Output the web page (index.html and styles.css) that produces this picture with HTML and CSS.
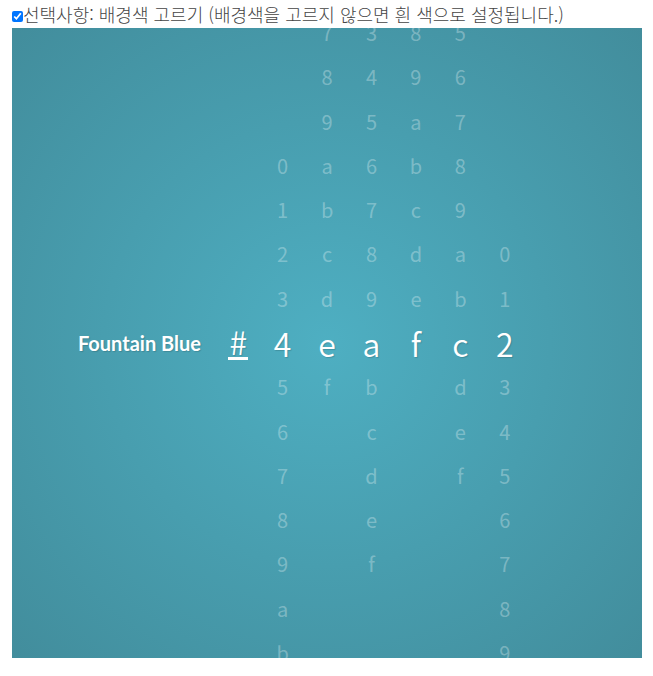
FILE: index.html
```html
<!DOCTYPE html>
<html lang="ko">
<head>
<meta charset="utf-8">
<title>배경색 고르기</title>
<link rel="stylesheet" href="styles.css">
</head>
<body>
<label class="option"><input class="option-box" type="checkbox" checked>선택사항: 배경색 고르기 (배경색을 고르지 않으면 흰 색으로 설정됩니다.)</label>
<main class="picker">
  <strong class="color-name">Fountain Blue</strong>
  <div class="dial">
    <div class="wheel from-center"><span class="hash">#</span></div>
    <div class="wheel from-fourth">
      <span>0</span><span>1</span><span>2</span><span>3</span><span class="picked">4</span><span>5</span><span>6</span><span>7</span><span>8</span><span>9</span><span>a</span><span>b</span>
    </div>
    <div class="wheel">
      <span>7</span><span>8</span><span>9</span><span>a</span><span>b</span><span>c</span><span>d</span><span class="picked">e</span><span>f</span>
    </div>
    <div class="wheel">
      <span>3</span><span>4</span><span>5</span><span>6</span><span>7</span><span>8</span><span>9</span><span class="picked">a</span><span>b</span><span>c</span><span>d</span><span>e</span><span>f</span>
    </div>
    <div class="wheel">
      <span>8</span><span>9</span><span>a</span><span>b</span><span>c</span><span>d</span><span>e</span><span class="picked">f</span>
    </div>
    <div class="wheel">
      <span>5</span><span>6</span><span>7</span><span>8</span><span>9</span><span>a</span><span>b</span><span class="picked">c</span><span>d</span><span>e</span><span>f</span>
    </div>
    <div class="wheel from-sixth">
      <span>0</span><span>1</span><span class="picked">2</span><span>3</span><span>4</span><span>5</span><span>6</span><span>7</span><span>8</span><span>9</span>
    </div>
  </div>
</main>
</body>
</html>
```
FILE: styles.css
```css
body {
  margin: 0 11px 18px 12px;
  background: #fff;
  font-family: "Noto Sans CJK KR", "Noto Sans", sans-serif;
}

.option {
  display: flex;
  align-items: center;
  height: 28px;
  color: #444;
  font-size: 18px;
  font-weight: 300;
  line-height: 28px;
  white-space: nowrap;
}

.option-box {
  flex: none;
  width: 11px;
  height: 11px;
  margin: 4px 0 0;
}

.picker {
  display: grid;
  grid-template-columns: 30% 311px;
  column-gap: 15px;
  align-content: center;
  align-items: center;
  aspect-ratio: 1;
  min-height: 0;
  overflow: hidden;
  color: #fff;
  background: radial-gradient(circle at center, #4eafc2, #428d9c);
}

.color-name {
  font-family: Lato, sans-serif;
  font-size: 20px;
  font-weight: 700;
  line-height: 28px;
  text-align: right;
  white-space: nowrap;
  text-shadow: 1px 1px 1px rgba(0, 0, 0, 0.15);
}

.dial {
  display: grid;
  grid-template-columns: repeat(7, 1fr);
  height: 664px;
  margin: -20px 0;
}

.wheel {
  display: grid;
  grid-template-rows: repeat(15, 1fr);
  place-items: center;
  min-height: 0;
  color: rgba(255, 255, 255, 0.3);
  font-size: 20px;
  font-weight: 400;
  line-height: 26px;
}

.from-fourth::before {
  content: "";
  grid-row: 1 / 4;
}

.from-sixth::before {
  content: "";
  grid-row: 1 / 6;
}

.from-center::before {
  content: "";
  grid-row: 1 / 8;
}

.picked,
.hash {
  color: #fff;
  font-size: 32px;
  font-weight: 350;
  text-shadow: 1px 1px 1px rgba(0, 0, 0, 0.15);
}

.hash {
  padding: 0 1px;
  border-bottom: 3px solid #fff;
  line-height: 32px;
}
```
